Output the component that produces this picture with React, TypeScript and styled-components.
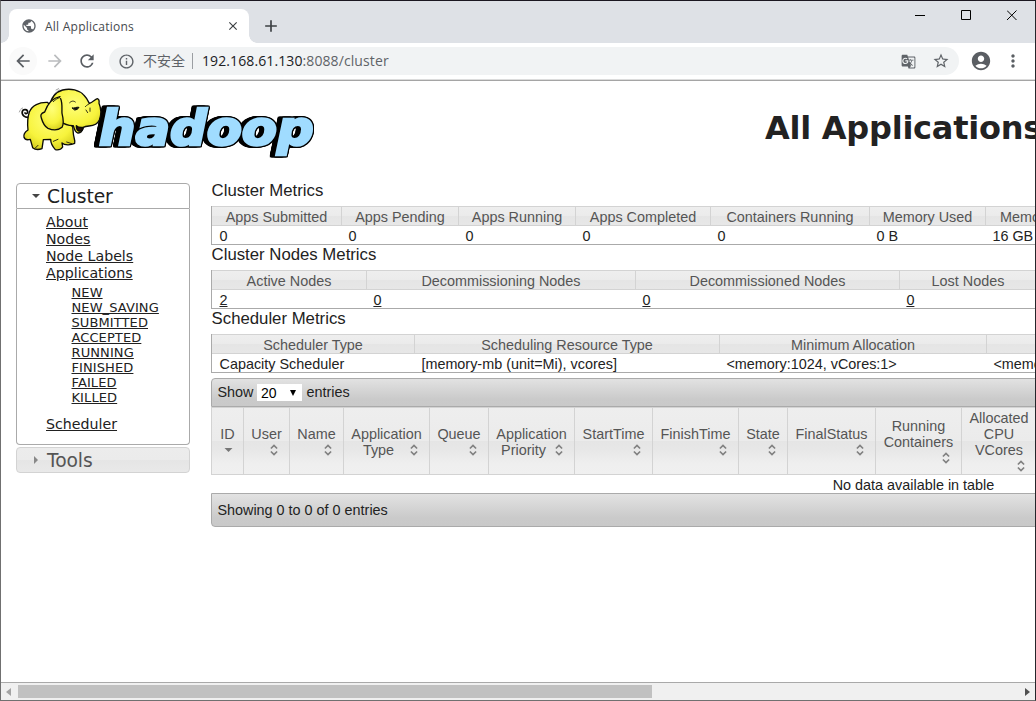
import React from 'react';
import styled, { createGlobalStyle, css } from 'styled-components';
import {
  MdArrowBack, MdArrowForward, MdRefresh, MdInfoOutline, MdStarBorder,
  MdAccountCircle, MdMoreVert, MdPublic, MdClose, MdAdd, MdGTranslate,
} from 'react-icons/md';

const GlobalStyle = createGlobalStyle`
  * { box-sizing: border-box; }
  html, body { margin: 0; padding: 0; overflow: hidden; background: #fff; }
`;

const arial = `"Liberation Sans", Arial, sans-serif`;
const verdana = `Verdana, "DejaVu Sans", sans-serif`;
const segoe = `"Open Sans", "Noto Sans CJK SC", sans-serif`;

const Window = styled.div`
  width: 1036px;
  height: 701px;
  display: flex;
  flex-direction: column;
  overflow: hidden;
  background: #fff;
  border: 1px solid #707070;
  border-top-color: #1b1720;
  border-right-color: #25262b;
`;

const TabStrip = styled.div`
  height: 42px;
  flex: none;
  display: flex;
  align-items: flex-start;
  background: #dee1e6;
  color: #3c4043;
`;

const Tab = styled.div`
  position: relative;
  width: 240px;
  height: 34px;
  margin: 8px 0 0 8px;
  padding: 0 9px 0 12px;
  display: flex;
  align-items: center;
  background: #fff;
  border-radius: 8px 8px 0 0;
  font: 12px ${segoe};
  &::before, &::after {
    content: '';
    position: absolute;
    bottom: 0;
    width: 8px;
    height: 8px;
  }
  &::before { left: -8px; background: radial-gradient(circle at 0 0, transparent 7.5px, #fff 8px); }
  &::after { right: -8px; background: radial-gradient(circle at 100% 0, transparent 7.5px, #fff 8px); }
`;

const TabTitle = styled.span`
  flex: 1;
  margin-left: 8px;
  letter-spacing: 0.24px;
  color: #45494d;
`;

const NewTab = styled.div`
  width: 20px;
  height: 20px;
  margin: 15px 0 0 12px;
`;

const WindowButtons = styled.div`
  margin: 9px 17px 0 auto;
  display: flex;
  gap: 35px;
  svg { display: block; }
`;

const Toolbar = styled.div`
  height: 36px;
  flex: none;
  display: flex;
  align-items: center;
  padding-left: 8px;
  color: #5f6368;
`;

const NavButton = styled.div<{ $round?: boolean; $faded?: boolean; $w: number }>`
  width: ${p => p.$w}px;
  height: 28px;
  display: flex;
  align-items: center;
  justify-content: center;
  border-radius: 14px;
  background: ${p => (p.$round ? '#fafafa' : 'transparent')};
  color: ${p => (p.$faded ? '#babcbe' : '#5a5e63')};
`;

const Omnibox = styled.div`
  width: 850px;
  height: 28px;
  margin-left: 8px;
  padding: 0 9px 0 9px;
  display: flex;
  align-items: center;
  border-radius: 14px;
  background: #f1f3f4;
  font: 14px/28px ${segoe};
`;

const Insecure = styled.span`
  margin-left: 8px;
  padding-right: 7px;
  height: 16px;
  line-height: 15px;
  width: 50px;
  white-space: nowrap;
  border-right: 1px solid #9b9ea2;
`;

const Address = styled.span`
  flex: 1;
  margin-left: 9px;
  letter-spacing: 0.1px;
  color: #5f6368;
  b { font-weight: 400; color: #202124; }
`;

const OmniActions = styled.div`
  display: flex;
  align-items: center;
  gap: 16px;
`;

const Viewport = styled.div`
  flex: 1;
  min-height: 0;
  overflow: hidden;
  border-top: 1px solid #dcdcdc;
  box-shadow: inset 0 1px 0 #a5a5a5;
  padding: 2px 0 0 15px;
  color: #222;
`;

const PageHeader = styled.header`
  height: 99px;
  width: 1600px;
  display: flex;
  align-items: flex-start;
`;

const Logo = styled.svg`
  display: block;
  width: 320px;
  height: 90px;
  margin: -2px 0 0 -6px;
`;

const Wordmark = styled.text`
  font: italic 700 146px "DejaVu Sans", Verdana, sans-serif;
  fill: #a0dcff;
  stroke: #a0dcff;
  stroke-width: 8px;
  filter:
    drop-shadow(3px 0 0 #000) drop-shadow(-3px 0 0 #000)
    drop-shadow(0 3px 0 #000) drop-shadow(0 -3px 0 #000)
    drop-shadow(-12px 0 0 #000);
`;

const PageTitle = styled.h1`
  margin: 26px 0 0 435px;
  font: bold 32px/40px ${verdana};
  letter-spacing: -0.25px;
  white-space: nowrap;
`;

const Columns = styled.div`
  display: flex;
  align-items: flex-start;
`;

const Sidebar = styled.nav`
  width: 174px;
  flex: none;
  margin-top: 2px;
  font-family: ${verdana};
`;

const glass = css`
  background: linear-gradient(#eeeeee 0%, #ebebeb 50%, #e5e5e5 50%, #e7e7e7 62%, #efefef 85%, #f0f0f0 100%);
`;

const AccordionHeader = styled.h3<{ $open?: boolean }>`
  height: 26px;
  margin: 0;
  padding-left: 15px;
  display: flex;
  align-items: center;
  gap: 7px;
  font-weight: 400;
  font-size: 18.7px;
  letter-spacing: -0.1px;
  line-height: 24px;
  ${p => (p.$open
    ? css`border: 1px solid #aaa; border-radius: 4px 4px 0 0; color: #212121; background: #fff;`
    : css`border: 1px solid #d3d3d3; border-radius: 4px; color: #555; margin-top: 2px;
        background: linear-gradient(#ececec 0%, #ebebeb 50%, #e5e5e5 50%, #e9e9e9 100%);`)}
  svg { display: block; flex: none; }
  span { padding-top: 2px; }
`;

const AccordionBody = styled.div`
  height: 236px;
  padding: 5px 0 0 29px;
  border: 1px solid #aaa;
  border-top: 0;
  border-radius: 0 0 4px 4px;
`;

const NavLink = styled.a<{ $sub?: boolean }>`
  display: block;
  width: max-content;
  margin-left: ${p => (p.$sub ? 25.5 : 0)}px;
  font-size: ${p => (p.$sub ? 13 : 14.2)}px;
  letter-spacing: ${p => (p.$sub ? 0.1 : 0)}px;
  line-height: ${p => (p.$sub ? 15 : 17)}px;
  color: #212121;
  text-decoration: underline;
  white-space: nowrap;
`;

const SubList = styled.div`
  padding: 3px 0 11px;
`;

const Main = styled.main`
  width: 1405px;
  flex: none;
  margin-left: 21px;
  font: 14.4px/18px ${arial};
`;

const SectionTitle = styled.div`
  height: 25px;
  padding-left: 0.6px;
  font-size: 16.75px;
  line-height: 19px;
`;

const MetricsTable = styled.div`
  height: 39px;
  display: flex;
  border-left: 1px solid #aaa;
  border-bottom: 1px solid #aaa;
`;

const Metric = styled.div<{ $w: number }>`
  width: ${p => p.$w}px;
  flex: none;
  white-space: nowrap;
`;

const MetricHead = styled.div`
  height: 20px;
  line-height: 20px;
  text-align: center;
  color: #555;
  border: 1px solid #d3d3d3;
  border-left: 0;
  background: linear-gradient(#eeeeee 0%, #ebebeb 50%, #e5e5e5 50%, #e7e7e7 100%);
`;

const MetricValue = styled.div<{ $link?: boolean }>`
  padding-left: 6.4px;
  height: 18px;
  line-height: 20px;
  text-decoration: ${p => (p.$link ? 'underline' : 'none')};
  ${Metric}:first-child & { padding-left: 7.5px; }
`;

const Bar = styled.div<{ $bottom?: boolean }>`
  height: ${p => (p.$bottom ? 34 : 29)}px;
  margin-top: ${p => (p.$bottom ? 0 : 5)}px;
  padding: 0 0 ${p => (p.$bottom ? 0 : 1)}px 5.4px;
  display: flex;
  align-items: center;
  line-height: 18px;
  border: 1px solid #aaa;
  border-radius: ${p => (p.$bottom ? '0 0 4px 4px' : '4px 4px 0 0')};
  background: linear-gradient(#e2e2e2, #cacaca 75%, #c9c9c9);
`;

const LengthSelect = styled.div`
  width: 45px;
  height: 17px;
  margin: 1px 4.5px 0 3.5px;
  padding: 0 6px 0 4px;
  display: flex;
  align-items: center;
  justify-content: space-between;
  background: #fff;
  color: #000;
  font-size: 14px;
`;

const HeadRow = styled.div`
  display: flex;
  height: 68px;
  border-left: 1px solid #d3d3d3;
`;

const HeadCell = styled.div<{ $w: number }>`
  width: ${p => p.$w}px;
  flex: none;
  padding: 2px 7px 0;
  display: flex;
  flex-direction: column;
  justify-content: center;
  border: 1px solid #d3d3d3;
  border-left: 0;
  color: #555;
  line-height: 16px;
  text-align: center;
  white-space: nowrap;
  ${glass}
`;

const HeadLine = styled.div`
  height: 16px;
  display: flex;
  justify-content: center;
`;

const HeadText = styled.span`
  flex: 1;
`;

const SortBox = styled.span`
  width: 16px;
  height: 16px;
  svg { display: block; }
`;

const EmptyRow = styled.div`
  height: 18px;
  line-height: 20px;
  text-align: center;
  color: #212121;
`;

const ScrollTrack = styled.div`
  height: 18px;
  flex: none;
  display: flex;
  align-items: center;
  padding: 0 5px;
  background: #f0f0f0;
  border-top: 1px solid #a9a9a9;
`;

const ScrollThumb = styled.div`
  width: 634px;
  height: 13px;
  margin: 0 auto 0 7px;
  background: #c1c1c1;
`;

function SortIcon({ active }: { active?: boolean }) {
  return (
    <SortBox>
      <svg width="16" height="16" viewBox="0 0 16 16">
        {active
          ? <path d="M4.5 6h8L8.5 10z" fill="#777" />
          : <path d="M4.9 6.5 8 3.5l3.1 3M4.9 9.5 8 12.5l3.1-3" fill="none" stroke="#808080" strokeWidth="1.7" />}
      </svg>
    </SortBox>
  );
}

function HadoopLogo() {
  return (
    <Logo viewBox="0 0 960 270">
      <defs>
        <radialGradient id="hide" cx="0.5" cy="0.35" r="0.7">
          <stop offset="0" stopColor="#ffff7a" />
          <stop offset="0.65" stopColor="#f7f33c" />
          <stop offset="1" stopColor="#d3cc1c" />
        </radialGradient>
      </defs>
      <Wordmark x={267} y={196} textLength={644} lengthAdjust="spacingAndGlyphs">hadoop</Wordmark>
      <g fill="url(#hide)" stroke="#0c0c08" strokeWidth="4" strokeLinejoin="round" strokeLinecap="round">
        <path d="M57 112C44 114 34 104 37 94c3-8 16-6 16 2 0 5-6 6-8 3" fill="none" strokeWidth="5" />
        <path d="M112 67C88 66 66 76 58 96c-6 18-6 36-4 54-9 6-14 14-12 22 3 8 12 8 19 6l7 25c8 7 20 6 28 3l4-27 22-1c0 10 4 20 14 31 10 2 18-2 22-8l-2-12c8 8 28 6 38 1 3-8-4-18-4-30l-2-20z" />
        <path d="M118 82c4-24 16-46 40-52 24-6 50 0 64 16 8 8 12 16 16 24 10-2 16-12 24-14 7 2 6 8 5 14 6 14 7 34 1 50-5 12-17 17-31 18-8 1-13 2-17 4-3 12-8 18-17 17-10-4-10-14-13-22-26 1-50-14-75-54z" />
        <path d="M199 137c6 6 14 6 21 5-2 10-8 13-14 11-5-3-7-9-7-16z" fill="#29100b" />
        <path d="M150 50C126 54 112 74 104 96c-12 4-13 10-10 18 4 14 10 26 20 31 14 6 30 7 42-3 6-10 4-26 0-42-1-14 2-30-4-44" />
        <path d="M130 65c6-6 12-10 19-12M170 186l15 5M76 204l8-8M130 184l14-6M226 80c5-6 10-7 14-10M228 90l5 8M240 84v10" fill="none" strokeWidth="2.5" />
        <path d="M187 84c6 2 12-4 20-2-2 5-8 8-12 8z" fill="#111" strokeWidth="3" />
        <path d="M179 68c6-6 12-6 17-2" fill="none" strokeWidth="2.5" />
        <path d="M136 40c4-5 8-8 13-10M138 30l8-4M28 96l3-6M33 87l5-3" fill="none" stroke="#777" strokeWidth="2" />
      </g>
    </Logo>
  );
}

type Cell = [string, number, string];

function Metrics({ title, cells, link }: { title: string; cells: Cell[]; link?: boolean }) {
  return (
    <>
      <SectionTitle>{title}</SectionTitle>
      <MetricsTable>
        {cells.map(([name, width, value]) => (
          <Metric key={name} $w={width}>
            <MetricHead>{name}</MetricHead>
            <MetricValue $link={link}>{value}</MetricValue>
          </Metric>
        ))}
      </MetricsTable>
    </>
  );
}

const clusterMetrics: Cell[] = [
  ['Apps Submitted', 130, '0'], ['Apps Pending', 117, '0'], ['Apps Running', 117, '0'],
  ['Apps Completed', 135, '0'], ['Containers Running', 159, '0'], ['Memory Used', 116, '0 B'],
  ['Memory Total', 115, '16 GB'],
];
const nodeMetrics: Cell[] = [
  ['Active Nodes', 155, '2'], ['Decommissioning Nodes', 269, '0'],
  ['Decommissioned Nodes', 264, '0'], ['Lost Nodes', 137, '0'],
];
const schedulerMetrics: Cell[] = [
  ['Scheduler Type', 203, 'Capacity Scheduler'],
  ['Scheduling Resource Type', 305, '[memory-mb (unit=Mi), vcores]'],
  ['Minimum Allocation', 267, '<memory:1024, vCores:1>'],
  ['Maximum Allocation', 267, '<memory:8192, vCores:4>'],
];

const appColumns: { lines: string[]; w: number; inline?: boolean }[] = [
  { lines: ['ID'], w: 32 },
  { lines: ['User'], w: 46 },
  { lines: ['Name'], w: 54 },
  { lines: ['Application', 'Type'], w: 86, inline: true },
  { lines: ['Queue'], w: 59 },
  { lines: ['Application', 'Priority'], w: 86, inline: true },
  { lines: ['StartTime'], w: 78 },
  { lines: ['FinishTime'], w: 86 },
  { lines: ['State'], w: 49 },
  { lines: ['FinalStatus'], w: 88 },
  { lines: ['Running', 'Containers'], w: 86 },
  { lines: ['Allocated', 'CPU', 'VCores'], w: 75 },
];

const states = ['NEW', 'NEW_SAVING', 'SUBMITTED', 'ACCEPTED', 'RUNNING', 'FINISHED', 'FAILED', 'KILLED'];

export default function App() {
  return (
    <Window>
      <GlobalStyle />
      <TabStrip>
        <Tab>
          <MdPublic size={16} color="#5f6368" />
          <TabTitle>All Applications</TabTitle>
          <MdClose size={14} />
        </Tab>
        <NewTab><MdAdd size={20} /></NewTab>
        <WindowButtons>
          <svg width="11" height="11"><path d="M0 5.5h10" stroke="#000" /></svg>
          <svg width="11" height="11"><path d="M.5.5h9v9h-9z" fill="none" stroke="#000" /></svg>
          <svg width="11" height="11"><path d="M0 .5l9.5 9.5M9.5.5L0 10" stroke="#000" /></svg>
        </WindowButtons>
      </TabStrip>
      <Toolbar>
        <NavButton $w={28} $round><MdArrowBack size={20} /></NavButton>
        <NavButton $w={36} $faded><MdArrowForward size={20} /></NavButton>
        <NavButton $w={28}><MdRefresh size={20} /></NavButton>
        <Omnibox>
          <MdInfoOutline size={17} />
          <Insecure>不安全</Insecure>
          <Address><b>192.168.61.130</b>:8088/cluster</Address>
          <OmniActions>
            <MdGTranslate size={15} />
            <MdStarBorder size={18} />
          </OmniActions>
        </Omnibox>
        <NavButton $w={44}><MdAccountCircle size={22} /></NavButton>
        <NavButton $w={20}><MdMoreVert size={20} /></NavButton>
      </Toolbar>
      <Viewport>
        <PageHeader>
          <HadoopLogo />
          <PageTitle>All Applications</PageTitle>
        </PageHeader>
        <Columns>
          <Sidebar>
            <AccordionHeader $open>
              <svg width="8" height="4"><path d="M0 0h8L4 4z" fill="#454545" /></svg>
              <span>Cluster</span>
            </AccordionHeader>
            <AccordionBody>
              <NavLink>About</NavLink>
              <NavLink>Nodes</NavLink>
              <NavLink>Node Labels</NavLink>
              <NavLink>Applications</NavLink>
              <SubList>
                {states.map(s => <NavLink key={s} $sub>{s}</NavLink>)}
              </SubList>
              <NavLink>Scheduler</NavLink>
            </AccordionBody>
            <AccordionHeader>
              <svg width="8" height="8"><path d="M2 0v8l4-4z" fill="#888" /></svg>
              <span>Tools</span>
            </AccordionHeader>
          </Sidebar>
          <Main>
            <Metrics title="Cluster Metrics" cells={clusterMetrics} />
            <Metrics title="Cluster Nodes Metrics" cells={nodeMetrics} link />
            <Metrics title="Scheduler Metrics" cells={schedulerMetrics} />
            <Bar>
              Show
              <LengthSelect>
                20
                <svg width="6" height="6"><path d="M0 0h6L3 6z" fill="#000" /></svg>
              </LengthSelect>
              entries
            </Bar>
            <HeadRow>
              {appColumns.map((c, i) => {
                const last = c.lines.length - 1;
                return (
                  <HeadCell key={c.lines.join(' ')} $w={c.w}>
                    {c.lines.map((line, n) => (
                      <HeadLine key={line}>
                        {c.inline && n === last
                          ? <><HeadText>{line}</HeadText><SortIcon /></>
                          : line}
                      </HeadLine>
                    ))}
                    {!c.inline && (
                      <HeadLine><HeadText /><SortIcon active={i === 0} /></HeadLine>
                    )}
                  </HeadCell>
                );
              })}
            </HeadRow>
            <EmptyRow>No data available in table</EmptyRow>
            <Bar $bottom>Showing 0 to 0 of 0 entries</Bar>
          </Main>
        </Columns>
      </Viewport>
      <ScrollTrack>
        <svg width="5" height="8"><path d="M5 0v8L0 4z" fill="#a3a3a3" /></svg>
        <ScrollThumb />
        <svg width="5" height="8"><path d="M0 0v8l5-4z" fill="#505050" /></svg>
      </ScrollTrack>
    </Window>
  );
}
